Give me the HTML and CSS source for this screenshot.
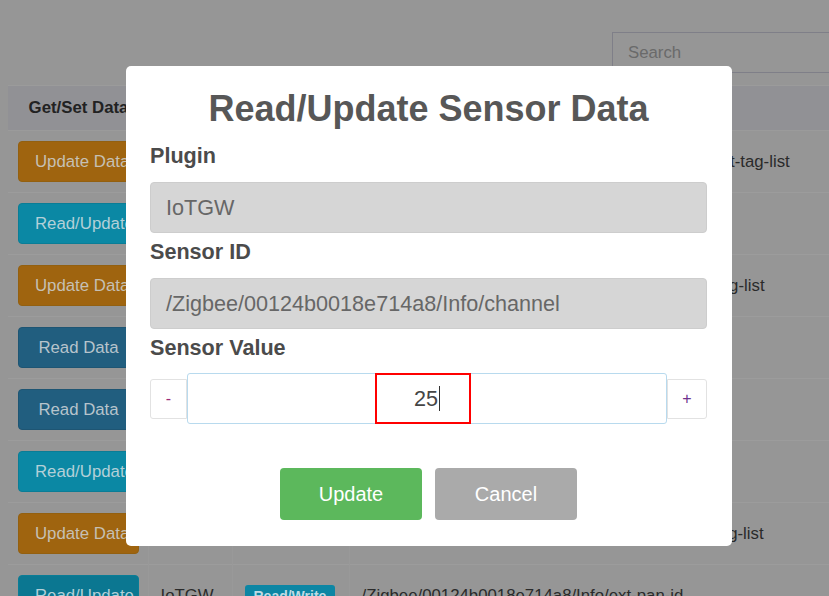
FILE: index.html
```html
<!DOCTYPE html>
<html lang="en">
<head>
<meta charset="utf-8">
<title>Read/Update Sensor Data</title>
<link rel="stylesheet" href="styles.css">
</head>
<body>
<div class="page">
  <div class="toolbar">
    <input class="search" type="text" placeholder="Search">
  </div>
  <table class="grid">
    <colgroup>
      <col class="c1"><col class="c2"><col class="c3"><col class="c4">
    </colgroup>
    <thead>
      <tr><th class="center">Get/Set Data</th><th>Plugin</th><th>Access</th><th>Sensor ID</th></tr>
    </thead>
    <tbody>
      <tr><td class="center"><span class="btn warn">Update Data</span></td><td>IoTGW</td><td><span class="badge">Write</span></td><td>/Zigbee/00124b0018e714a8/Info/mesh-groups-ext-tag-list</td></tr>
      <tr><td class="center"><span class="btn info">Read/Update</span></td><td>IoTGW</td><td><span class="badge">Read/Write</span></td><td>/Zigbee/00124b0018e714a8/Info/pan-id</td></tr>
      <tr><td class="center"><span class="btn warn">Update Data</span></td><td>IoTGW</td><td><span class="badge">Write</span></td><td>/Zigbee/00124b0018e714a8/Info/endpoints-ext-tag-list</td></tr>
      <tr><td class="center"><span class="btn prim">Read Data</span></td><td>IoTGW</td><td><span class="badge">Read</span></td><td>/Zigbee/00124b0018e714a8/Info/ieee</td></tr>
      <tr><td class="center"><span class="btn prim">Read Data</span></td><td>IoTGW</td><td><span class="badge">Read</span></td><td>/Zigbee/00124b0018e714a8/Info/nwk</td></tr>
      <tr><td class="center"><span class="btn info">Read/Update</span></td><td>IoTGW</td><td><span class="badge">Read/Write</span></td><td>/Zigbee/00124b0018e714a8/Info/channel</td></tr>
      <tr><td class="center"><span class="btn warn">Update Data</span></td><td>IoTGW</td><td><span class="badge">Write</span></td><td>/Zigbee/00124b0018e714a8/Info/endpoint-nwk-tag-list</td></tr>
      <tr><td class="center"><span class="btn info dark">Read/Update</span></td><td>IoTGW</td><td><span class="badge">Read/Write</span></td><td>/Zigbee/00124b0018e714a8/Info/ext-pan-id</td></tr>
    </tbody>
  </table>
</div>

<div class="modal">
  <h2 class="title">Read/Update Sensor Data</h2>
  <div class="label first">Plugin</div>
  <div class="field">IoTGW</div>
  <div class="label">Sensor ID</div>
  <div class="field">/Zigbee/00124b0018e714a8/Info/channel</div>
  <div class="label last">Sensor Value</div>
  <div class="spinner">
    <span class="step minus">-</span>
    <div class="value">25<span class="caret"></span><span class="mark"></span></div>
    <span class="step plus">+</span>
  </div>
  <div class="actions">
    <span class="action ok">Update</span>
    <span class="action cancel">Cancel</span>
  </div>
</div>
</body>
</html>
```
FILE: styles.css
```css
html, body {
  margin: 0;
  padding: 0;
}
body {
  background: #969696;
  overflow: hidden;
  font-family: "Liberation Sans", Arial, sans-serif;
  color: #2a2a2a;
}
.page {
  width: 1100px;
  padding: 32px 0 0 8px;
}
.toolbar {
  display: flex;
  padding-left: 604px;
  margin-bottom: 12px;
}
.search {
  box-sizing: border-box;
  width: 400px;
  height: 41px;
  border: 1px solid #7f7f88;
  background: #969696;
  padding: 0 15px;
  font: 16.8px "Liberation Sans", Arial, sans-serif;
  color: #333;
  outline: none;
}
.search::placeholder {
  color: #6a6a6a;
}
.grid {
  border-collapse: collapse;
  table-layout: fixed;
  width: 1000px;
  font-size: 16.8px;
  border-top: 1px solid #9b9b9b;
}
.c1 { width: 140px; }
.c2 { width: 84px; }
.c3 { width: 117px; }
.grid th {
  height: 44px;
  background: #919195;
  font-weight: 700;
  text-align: left;
  padding: 0 12px;
  color: #222;
  border-bottom: 1px solid #9b9b9b;
}
.grid td {
  padding: 10px 12px;
  border-top: 1px solid #9c9c9c;
  border-left: 1px solid #999999;
  white-space: nowrap;
  vertical-align: middle;
  color: #2a2a2a;
}
.grid td:first-child {
  border-left: none;
}
.grid th.center, .grid td.center {
  text-align: center;
  padding-left: 10px;
  padding-right: 9px;
}
.btn {
  display: inline-block;
  box-sizing: border-box;
  width: 121px;
  height: 41px;
  padding: 0 16px;
  line-height: 39px;
  border-radius: 4px;
  border: 1px solid transparent;
  vertical-align: middle;
  white-space: nowrap;
  text-align: center;
}
.warn { background: #9f640f; border-color: #936010; color: #c6c0b4; }
.info { background: #0b88a4; border-color: #0a7d96; color: #b3d0d8; }
.prim { background: #215e7f; border-color: #1e5573; color: #b7c4cc; }
.info.dark { background: #0b7791; }
.badge {
  display: inline-block;
  padding: 2px 9px;
  border-radius: 3px;
  background: #0c86a4;
  color: #bfdbe3;
  font-weight: 700;
  font-size: 14px;
  line-height: 18px;
  vertical-align: middle;
}

.modal {
  position: fixed;
  left: 126px;
  top: 66px;
  width: 606px;
  height: 480px;
  box-sizing: border-box;
  padding: 21px 25px 0 24px;
  background: #ffffff;
  border-radius: 5px;
}
.title {
  margin: 0;
  font: 700 36px/44px "Liberation Sans", Arial, sans-serif;
  text-align: center;
  color: #575757;
}
.label {
  font-weight: 700;
  font-size: 21.6px;
  line-height: 30px;
  color: #4b4b4b;
  margin: 4px 0 11px;
}
.label.first { margin-top: 10px; }
.label.last { margin-bottom: 10px; }
.field {
  box-sizing: border-box;
  height: 51px;
  display: flex;
  align-items: center;
  padding: 0 15px;
  background: #d6d6d6;
  border: 1px solid #cdcdcd;
  border-radius: 4px;
  font-size: 21.6px;
  color: #676767;
  white-space: nowrap;
}
.spinner {
  display: flex;
  align-items: center;
  height: 51px;
}
.step {
  box-sizing: border-box;
  height: 40px;
  display: flex;
  align-items: center;
  justify-content: center;
  background: #fff;
  border: 1px solid #e2e2e2;
  font-size: 16px;
}
.minus {
  width: 37px;
  border-radius: 3px 0 0 3px;
  color: #9c2a78;
}
.plus {
  width: 40px;
  border-radius: 0 3px 3px 0;
  color: #6f318e;
}
.value {
  position: relative;
  box-sizing: border-box;
  width: 480px;
  height: 51px;
  border: 1px solid #b8daee;
  border-radius: 3px;
  display: flex;
  align-items: center;
  justify-content: center;
  font-size: 21.6px;
  color: #454545;
}
.caret {
  display: inline-block;
  width: 1px;
  height: 25px;
  background: #333;
  margin-left: 1px;
}
.mark {
  position: absolute;
  left: 187px;
  top: -1px;
  width: 96px;
  height: 51px;
  box-sizing: border-box;
  border: 2px solid #ff0000;
}
.actions {
  display: flex;
  justify-content: center;
  gap: 13px;
  margin-top: 44px;
}
.action {
  width: 142px;
  height: 52px;
  display: flex;
  align-items: center;
  justify-content: center;
  border-radius: 4px;
  font-size: 20px;
  color: #ffffff;
}
.ok { background: #5cb85c; }
.cancel { background: #aaaaaa; }
```
